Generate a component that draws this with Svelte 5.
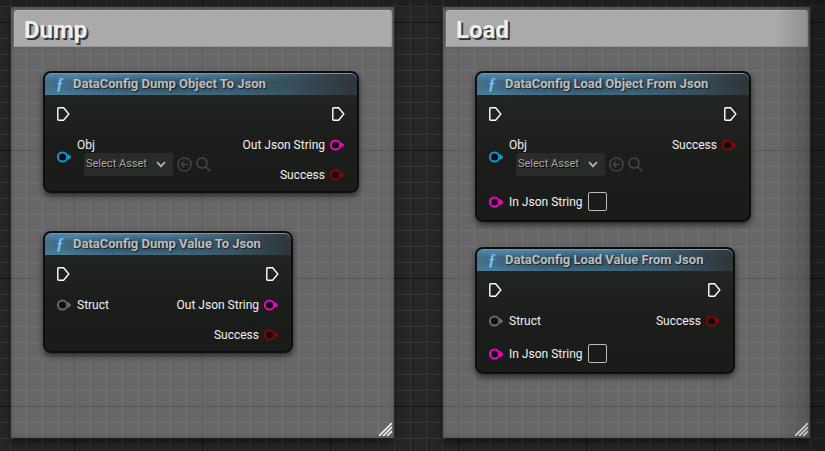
<script>
  const comments = [
    {
      title: 'Dump', x: 11, y: 7, w: 383, h: 431,
      nodes: [
        {
          id: 'dump-object', title: 'DataConfig Dump Object To Json', x: 32, y: 64, w: 316,
          inputs: [{ label: 'Obj', kind: 'object' }],
          outputs: [{ label: 'Out Json String', kind: 'string' }, { label: 'Success', kind: 'bool' }]
        },
        {
          id: 'dump-value', title: 'DataConfig Dump Value To Json', x: 32, y: 224, w: 250,
          inputs: [{ label: 'Struct', kind: 'struct' }],
          outputs: [{ label: 'Out Json String', kind: 'string' }, { label: 'Success', kind: 'bool' }]
        }
      ]
    },
    {
      title: 'Load', x: 443, y: 7, w: 367, h: 431,
      nodes: [
        {
          id: 'load-object', title: 'DataConfig Load Object From Json', x: 32, y: 64, w: 276,
          inputs: [{ label: 'Obj', kind: 'object' }, { label: 'In Json String', kind: 'string' }],
          outputs: [{ label: 'Success', kind: 'bool' }]
        },
        {
          id: 'load-value', title: 'DataConfig Load Value From Json', x: 32, y: 240, w: 260,
          inputs: [{ label: 'Struct', kind: 'struct' }, { label: 'In Json String', kind: 'string' }],
          outputs: [{ label: 'Success', kind: 'bool' }]
        }
      ]
    }
  ];
</script>

{#snippet execPin()}
  <svg class="exec" width="13" height="14" viewBox="0 0 13 14" aria-hidden="true">
    <path d="M1.8 .8H6.6L11.8 7L6.6 13.2H1.8Q.8 13.2 .8 12.2V1.8Q.8 .8 1.8 .8Z" />
  </svg>
{/snippet}

{#snippet pin(kind)}
  <svg class="pin {kind}" width="15" height="12" viewBox="0 0 15 12" aria-hidden="true">
    <circle cx="5.5" cy="6" r="4.6" />
    <path d="M11 2.8L14.4 6L11 9.2Z" />
  </svg>
{/snippet}

<main class="graph">
  {#each comments as c}
    <section class="comment" style="left:{c.x}px;top:{c.y}px;width:{c.w}px;height:{c.h}px">
      <h2>{c.title}</h2>
      {#each c.nodes as n}
        <article class="node" style="left:{n.x}px;top:{n.y}px;width:{n.w}px">
          <header><span class="fn" aria-hidden="true">ƒ</span><h3>{n.title}</h3></header>
          <div class="body">
            <div class="side">
              <div class="row first">{@render execPin()}</div>
              {#each n.inputs as p, i}
                {#if p.kind === 'object'}
                  <div class="row asset-row">
                    {@render pin(p.kind)}
                    <div class="asset">
                      <label for="{n.id}-{i}">{p.label}</label>
                      <div class="picker">
                        <div class="drop">
                          <select id="{n.id}-{i}"><option>Select Asset</option></select>
                          <svg class="chevron" width="10" height="7" viewBox="0 0 10 7" aria-hidden="true"><path d="M1 1L5 5.4L9 1" /></svg>
                        </div>
                        <button type="button" aria-label="Use selected asset">
                          <svg width="15" height="15" viewBox="0 0 15 15"><circle cx="7.5" cy="7.5" r="6.6" /><path d="M11.5 7.5H4.5M7.2 4.5L4.2 7.5L7.2 10.5" /></svg>
                        </button>
                        <button type="button" aria-label="Browse to asset">
                          <svg width="15" height="15" viewBox="0 0 15 15"><circle cx="6" cy="6" r="5.1" /><path d="M9.7 9.7L14.2 14.2" /></svg>
                        </button>
                      </div>
                    </div>
                  </div>
                {:else if p.kind === 'string'}
                  <div class="row text-row">
                    {@render pin(p.kind)}
                    <label for="{n.id}-{i}">{p.label}</label>
                    <input id="{n.id}-{i}" type="text" />
                  </div>
                {:else}
                  <div class="row">{@render pin(p.kind)}<span>{p.label}</span></div>
                {/if}
              {/each}
            </div>
            <div class="side out">
              <div class="row first">{@render execPin()}</div>
              {#each n.outputs as p}
                <div class="row"><span>{p.label}</span>{@render pin(p.kind)}</div>
              {/each}
            </div>
          </div>
        </article>
      {/each}
      <svg class="grip" width="13" height="13" viewBox="0 0 13 13" aria-hidden="true">
        <path d="M0 13L13 0M4 13L13 4M8 13L13 8" />
      </svg>
    </section>
  {/each}
  <div class="vignette"></div>
</main>

<style>
  :global(body) { margin: 0; background: #262626; }
  .graph {
    position: relative;
    min-height: 100vh;
    overflow: hidden;
    font: 12px/16px Roboto, "Liberation Sans", sans-serif;
    color: #f0f0f0;
    background-color: #262626;
    background-image:
      linear-gradient(90deg, #151515 1px, transparent 1px),
      linear-gradient(#151515 1px, transparent 1px),
      linear-gradient(90deg, #353535 1px, transparent 1px),
      linear-gradient(#353535 1px, transparent 1px);
    background-size: 128px 128px, 128px 128px, 16px 16px, 16px 16px;
    background-position: 74px 22px, 74px 22px, 10px 6px, 10px 6px;
  }
  .comment {
    position: absolute;
    box-sizing: border-box;
    padding: 3px 2px 0 3px;
    background: rgba(255, 255, 255, .3);
    box-shadow: 0 4px 8px rgba(0, 0, 0, .5), inset 0 0 5px rgba(0, 0, 0, .28);
  }
  h2 {
    box-sizing: border-box;
    height: 37px;
    margin: 0;
    padding: 0 9px;
    border: 1px solid #b8b8b8;
    border-color: #bbb #999 #999 #b4b4b4;
    border-radius: 3px 3px 0 0;
    background: #aaa;
    color: #eee;
    font-size: 24px;
    line-height: 38px;
    font-weight: 700;
    text-shadow: 1px 1px 0 #444, 2px 2px 0 #333;
  }
  .node {
    position: absolute;
    box-sizing: border-box;
    border: 2px solid #0c0d0c;
    border-radius: 8px;
    background: linear-gradient(#262826, #1b1d1b 60%, #1a1c1a);
    box-shadow: 0 3px 6px rgba(0, 0, 0, .6);
  }
  header {
    display: flex;
    align-items: center;
    height: 22px;
    padding-left: 11px;
    border-radius: 6px 6px 0 0;
    background:
      radial-gradient(ellipse 42% 60% at 40% 60%, rgba(30, 45, 55, .6), transparent),
      linear-gradient(90deg, transparent 50%, rgba(43, 49, 51, .9) 98%),
      linear-gradient(#5489ab, #446f8a 40%, #487a98);
    box-shadow: inset 0 1px 0 #5f9cc0;
  }
  .fn {
    width: 17px;
    color: #6fc4f5;
    font: italic 700 16px/20px "Liberation Serif", serif;
  }
  h3 {
    margin: 0;
    color: #bdbdbd;
    font-size: 13px;
    line-height: 20px;
    font-weight: 700;
    text-shadow: 1px 1px 1px rgba(0, 0, 0, .6);
    white-space: nowrap;
  }
  .body {
    display: flex;
    justify-content: space-between;
    padding: 3px 12px 1px;
  }
  .side { display: flex; flex-direction: column; }
  .out { align-items: flex-end; }
  .row { display: flex; align-items: center; gap: 5px; height: 30px; white-space: nowrap; }
  .first { height: 32px; }
  .asset-row { height: 54px; }
  .text-row { height: 35px; }
  svg { display: block; flex: none; }
  .exec path { fill: none; stroke: #fff; stroke-width: 1.4; }
  .pin circle { fill: #0d0f0d; stroke: currentColor; stroke-width: 2; }
  .pin path { fill: currentColor; }
  .object { color: #0d96d8; }
  .string { color: #f200c8; }
  .bool { color: #8f0000; }
  .struct { color: #6e6767; }
  .asset { display: flex; flex-direction: column; padding-bottom: 2px; }
  .picker { display: flex; align-items: center; gap: 4px; padding-left: 7px; }
  .drop { position: relative; }
  select {
    display: block;
    appearance: none;
    box-sizing: border-box;
    width: 89px;
    height: 23px;
    padding: 0 0 0 2px;
    border: 0;
    border-radius: 3px;
    background: #2a2c2a;
    color: #a8a8a8;
    font: 11px/22px Roboto, "Liberation Sans", sans-serif;
    text-shadow: 1px 1px 0 #000;
  }
  .chevron { position: absolute; right: 7px; top: 8px; pointer-events: none; }
  .chevron path { fill: none; stroke: #b4b4b4; stroke-width: 1.8; }
  button { padding: 0; border: 0; background: none; }
  button svg { fill: none; stroke: #444644; stroke-width: 1.5; }
  input {
    box-sizing: border-box;
    width: 19px;
    height: 19px;
    padding: 0;
    border: 1px solid #bbb;
    border-radius: 2px;
    background: transparent;
    color: inherit;
    font: inherit;
  }
  .grip { position: absolute; right: 2px; bottom: 2px; }
  .grip path { fill: none; stroke: #f0f0f0; stroke-width: 1.7; }
  .vignette {
    position: absolute;
    inset: 0;
    pointer-events: none;
    background:
      linear-gradient(270deg, rgba(0, 0, 0, .24), transparent 50px),
      linear-gradient(rgba(0, 0, 0, .2), transparent 12px);
  }
</style>
